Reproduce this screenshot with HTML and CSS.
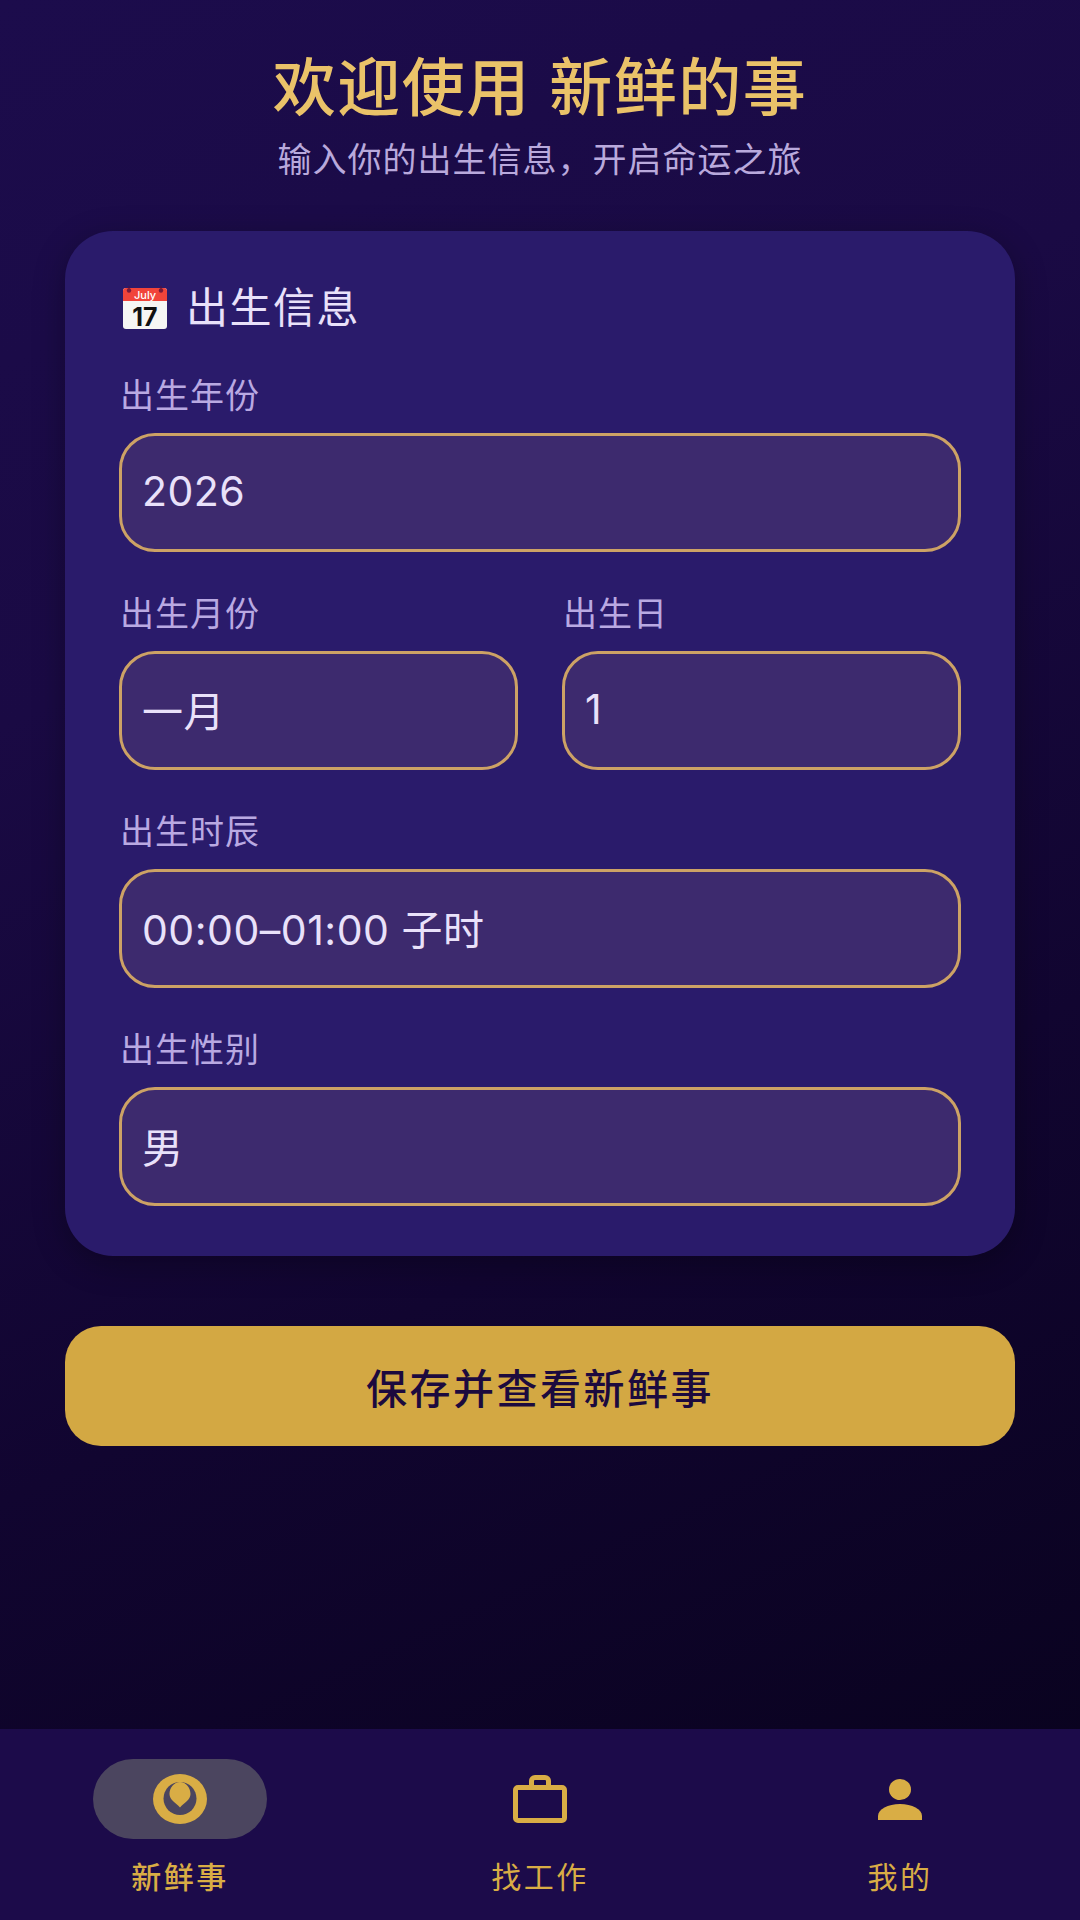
FILE: index.html
```html
<!DOCTYPE html>
<html lang="zh-CN">

<head>
    <meta charset="UTF-8">
    <meta name="viewport" content="width=device-width, initial-scale=1.0">
    <title>新鲜的事</title>
    <link rel="stylesheet" href="styles.css">
</head>

<body>

    <div id="page">
        <div id="main">
            <div class="header">
                <h1>欢迎使用 新鲜的事</h1>
                <p>输入你的出生信息，开启命运之旅</p>
            </div>

            <div class="card">
                <h2 class="card-title">
                    <!-- Calendar icon -->
                    <svg class="calendar" viewBox="0 0 46 44">
                        <rect x="1" y="2" width="44" height="41" rx="3" fill="#f6f6f4" />
                        <path d="M1 15V5a3 3 0 0 1 3-3h38a3 3 0 0 1 3 3v10z" fill="#f1443a" />
                        <path d="M7 0v4M39 0v4" stroke="#5a1030" stroke-width="1" />
                        <circle cx="7" cy="4.500" r="2.200" fill="#7a1a3a" />
                        <circle cx="39" cy="4.500" r="2.200" fill="#7a1a3a" />
                        <text x="23" y="12.500" class="cal-month">July</text>
                        <text x="23" y="39.500" class="cal-day">17</text>
                    </svg>
                    <span>出生信息</span>
                </h2>

                <div class="field">
                    <div class="label">出生年份</div>
                    <div class="input">2026</div>
                </div>

                <div class="field-row">
                    <div class="field">
                        <div class="label">出生月份</div>
                        <div class="input">一月</div>
                    </div>
                    <div class="field">
                        <div class="label">出生日</div>
                        <div class="input">1</div>
                    </div>
                </div>

                <div class="field">
                    <div class="label">出生时辰</div>
                    <div class="input">00:00–01:00 子时</div>
                </div>

                <div class="field">
                    <div class="label">出生性别</div>
                    <div class="input">男</div>
                </div>
            </div>

            <button class="save-btn">保存并查看新鲜事</button>
        </div>

        <!-- Bottom navigation -->
        <div class="nav">
            <div class="nav-item current">
                <div class="nav-icon active">
                    <svg class="logo" viewBox="0 0 54 50">
                        <ellipse cx="27" cy="25" rx="27" ry="25" fill="#d9ad45" />
                        <circle cx="27" cy="24.500" r="16.500" fill="#4b455f" />
                        <path d="M27 8C33 8 37.500 14 37.500 20C37.500 26 31 29 27 33.500C23 29 16.500 26 16.500 20C16.500 14 21 8 27 8Z" fill="#d9ad45" />
                    </svg>
                </div>
                <span>新鲜事</span>
            </div>
            <div class="nav-item">
                <div class="nav-icon">
                    <svg class="bag" viewBox="0 0 54 48" fill="none" stroke="#d9ad45" stroke-width="5">
                        <rect x="2.500" y="12.500" width="49" height="33" rx="2.500" />
                        <path d="M18.500 12V6a3.500 3.500 0 0 1 3.500-3.500h10a3.500 3.500 0 0 1 3.500 3.500v6" />
                    </svg>
                </div>
                <span>找工作</span>
            </div>
            <div class="nav-item">
                <div class="nav-icon">
                    <svg class="person" viewBox="0 0 44 41" fill="#d9ad45">
                        <ellipse cx="22" cy="10.500" rx="11" ry="10.500" />
                        <path d="M0 41V37C0 30 10 25 22 25S44 30 44 37V41Z" />
                    </svg>
                </div>
                <span>我的</span>
            </div>
        </div>
    </div>

</body>

</html>
```

FILE: styles.css
```css
* {
    box-sizing: border-box;
}

body {
    margin: 0;
    padding: 0;
    font-family: Inter, "Noto Sans CJK SC", sans-serif;
}

#page {
    width: 1080px;
    height: 1920px;
    display: flex;
    flex-direction: column;
    background: linear-gradient(155deg, #1c0c4c 0%, #1a0a44 30%, #110530 62%, #08021c 100%);
}

#main {
    flex: 1;
    padding: 51px 65px 0;
}

.header {
    text-align: center;
}

.header h1 {
    margin: 0;
    font-size: 63px;
    line-height: 72px;
    font-weight: 500;
    letter-spacing: 1.500px;
    color: #eac269;
}

.header p {
    margin: 15px 0 0;
    font-size: 34px;
    line-height: 44px;
    letter-spacing: 1px;
    color: #b9a9dc;
}

.card {
    margin-top: 49px;
    padding: 49px 54px 50px;
    border-radius: 48px;
    background-color: #2a1b6b;
    box-shadow: 0 8px 32px rgba(0, 0, 0, 0.3);
}

.card-title {
    margin: 0 0 38px;
    display: flex;
    align-items: center;
    gap: 18px;
    font-size: 42px;
    line-height: 56px;
    font-weight: 400;
    letter-spacing: 1.500px;
    color: #e9e1fa;
}

.calendar {
    width: 46px;
    height: 44px;
    margin-left: 3px;
}

.cal-month {
    font-size: 11px;
    font-weight: 500;
    fill: #ffffff;
    text-anchor: middle;
    letter-spacing: 0;
}

.cal-day {
    font-size: 25px;
    font-weight: 700;
    fill: #111111;
    text-anchor: middle;
    letter-spacing: 0;
}

.field {
    margin-bottom: 40px;
}

.card > .field:last-child {
    margin-bottom: 0;
}

.field-row {
    display: grid;
    grid-template-columns: 1fr 1fr;
    gap: 44px;
}

.label {
    margin-bottom: 15px;
    padding-left: 1px;
    font-size: 34px;
    line-height: 44px;
    letter-spacing: 1px;
    color: #b9a9e2;
}

.input {
    height: 119px;
    padding: 0 20px 3px;
    display: flex;
    align-items: center;
    border: 3px solid #cda265;
    border-radius: 36px;
    background-color: #3d2a6e;
    font-size: 41px;
    letter-spacing: 0.500px;
    color: #e9e1fa;
}

.save-btn {
    display: block;
    width: 100%;
    height: 120px;
    margin-top: 70px;
    border: none;
    border-radius: 36px;
    background-color: #d3a843;
    font-family: inherit;
    font-size: 41px;
    font-weight: 500;
    letter-spacing: 2.500px;
    color: #1c0a3e;
}

.nav {
    height: 191px;
    padding-top: 30px;
    display: grid;
    grid-template-columns: repeat(3, 1fr);
    background-color: #1c0b4a;
}

.nav-item {
    display: flex;
    flex-direction: column;
    align-items: center;
    font-size: 30px;
    line-height: 40px;
    font-weight: 400;
    letter-spacing: 2.500px;
    color: #d9ad45;
}

.nav-item.current {
    font-weight: 500;
}

.nav-icon {
    width: 174px;
    height: 80px;
    margin-bottom: 18px;
    display: flex;
    align-items: center;
    justify-content: center;
    border-radius: 40px;
}

.nav-icon.active {
    background-color: #4b455f;
}

.logo {
    width: 54px;
    height: 50px;
}

.bag {
    width: 54px;
    height: 48px;
}

.person {
    width: 44px;
    height: 41px;
}
```
